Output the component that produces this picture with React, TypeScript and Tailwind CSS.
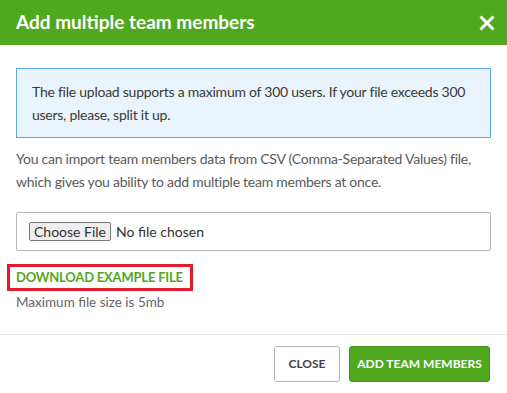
export default function App() {
  return (
    <div className="w-[507px] h-[393px] bg-white overflow-hidden font-['Lato','Open_Sans',sans-serif]">
      <div className="h-[45px] bg-[#4fa81e] flex items-center justify-between pl-4 pr-[11px]">
        <h1 className="text-white text-[19px] font-bold">Add multiple team members</h1>
        <svg width="18" height="18" viewBox="0 0 18 18" className="text-white">
          <path d="M2.5 2.5 L15.5 15.5 M15.5 2.5 L2.5 15.5" stroke="currentColor" strokeWidth="3" />
        </svg>
      </div>
      <div className="px-4 pt-[23px]">
        <div className="border border-[#5aa9f5] bg-[#eaf4fd] px-[15px] py-[11px] text-[14px] tracking-[-0.25px] leading-[23px] text-[#3b3a33]">
          The file upload supports a maximum of 300 users. If your file exceeds 300 users, please, split it up.
        </div>
        <p className="mt-[9px] text-[14px] tracking-[-0.25px] leading-[23px] text-[#5a5a5a]">
          You can import team members data from CSV (Comma-Separated Values) file, which gives you ability to add multiple team members at once.
        </p>
        <div className="mt-[19px] h-[39px] border border-[#b7b7b7] rounded-[2px] flex items-center pl-[12px] gap-[5px]">
          <span className="w-[82px] h-[19px] border border-[#767676] bg-[#efefef] rounded-[2px] text-[14px] leading-[17px] text-[#333] text-center">Choose File</span>
          <span className="text-[14px] text-[#333]">No file chosen</span>
        </div>
        <div className="mt-[13px] -ml-[9px] w-[186px] h-[27px] border-[3px] border-[#e11d2b] flex items-center pl-[6px]">
          <span className="text-[13px] tracking-[-0.2px] font-bold text-[#4fa81e] uppercase">Download example file</span>
        </div>
        <p className="mt-[1px] text-[13.5px] text-[#666]">Maximum file size is 5mb</p>
      </div>
      <div className="mt-[22px] border-t border-[#e6e6e6] flex justify-end gap-[9px] px-[17px] pt-[11px]">
        <button className="w-[66px] h-[36px] border border-[#b3b3b3] rounded-[3px] text-[12px] font-bold text-[#444] uppercase">Close</button>
        <button className="w-[141px] h-[36px] bg-[#4fa81e] border border-[#43941a] rounded-[3px] text-[12px] font-bold text-white uppercase">Add team members</button>
      </div>
    </div>
  );
}
